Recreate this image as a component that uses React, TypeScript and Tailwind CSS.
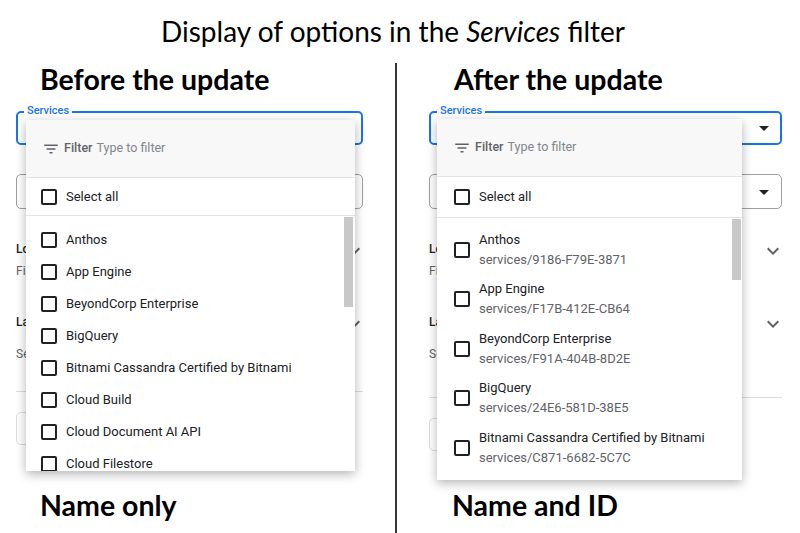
import React from "react";

const FilterIcon = () => (
  <svg width="18" height="18" viewBox="0 0 24 24" fill="#5f6368">
    <path d="M10 18h4v-2h-4v2zM3 6v2h18V6H3zm3 7h12v-2H6v2z" />
  </svg>
);
const ArrowDrop = () => (
  <svg width="24" height="24" viewBox="0 0 24 24" fill="#202124">
    <path d="M7 10l5 5 5-5z" />
  </svg>
);
const Chevron = () => (
  <svg width="24" height="24" viewBox="0 0 24 24" fill="#5f6368">
    <path d="M16.59 8.59L12 13.17 7.41 8.59 6 10l6 6 6-6z" />
  </svg>
);
const Box = () => (
  <div className="w-[16px] h-[16px] border-2 border-[#202124] rounded-[2px] shrink-0" />
);

const namesLeft = [
  "Anthos",
  "App Engine",
  "BeyondCorp Enterprise",
  "BigQuery",
  "Bitnami Cassandra Certified by Bitnami",
  "Cloud Build",
  "Cloud Document AI API",
  "Cloud Filestore",
];
const namesRight: [string, string][] = [
  ["Anthos", "services/9186-F79E-3871"],
  ["App Engine", "services/F17B-412E-CB64"],
  ["BeyondCorp Enterprise", "services/F91A-404B-8D2E"],
  ["BigQuery", "services/24E6-581D-38E5"],
  ["Bitnami Cassandra Certified by Bitnami", "services/C871-6682-5C7C"],
];

function Underlay({ arrows, vis, wide }: { arrows: boolean; vis: string; wide: boolean }) {
  return (
    <div className="w-full">
      <div className="relative mt-[8px] h-[34px] border-2 border-[#1a73e8] rounded-[5px] flex items-center justify-end pr-[4px]">
        <span className="absolute -top-[9px] left-[6px] bg-white px-[3px] text-[11px] leading-[14px] font-medium text-[#1a73e8]">
          Services
        </span>
        {arrows && <ArrowDrop />}
      </div>
      <div className="mt-[29px] h-[35px] border border-[#9aa0a6] rounded-[5px] flex items-center justify-end pr-[5px]">
        {arrows && <ArrowDrop />}
      </div>
      <div className="mt-[32px] flex justify-between items-start">
        <div className={vis + " overflow-hidden whitespace-nowrap"}>
          <div className="text-[12px] leading-[16px] font-medium text-[#202124]">Location</div>
          <div className="mt-[6px] text-[12px] leading-[16px] text-[#5f6368]">Filter by location</div>
        </div>
        <div className="-mr-[3px] -mt-[2px]"><Chevron /></div>
      </div>
      <div className="mt-[35px] flex justify-between items-start">
        <div className={vis + " overflow-hidden whitespace-nowrap"}>
          <div className="text-[12px] leading-[16px] font-medium text-[#202124]">Labels</div>
          <div className="mt-[16px] text-[12px] leading-[16px] text-[#5f6368]">Select labels</div>
        </div>
        <div className="-mr-[3px] -mt-[2px]"><Chevron /></div>
      </div>
      <div className={(wide ? "mt-[35px]" : "mt-[29px]") + " h-px bg-[#dadce0]"} />
      <div className="mt-[20px] h-[33px] w-[120px] border border-[#dadce0] rounded-[5px]" />
    </div>
  );
}

function MenuTop() {
  return (
    <div className="h-[58px] shrink-0 bg-[#f8f8f8] flex items-center pl-[16px] gap-[3px] border-b border-[#e3e3e3]">
      <FilterIcon />
      <span className="text-[12.5px] font-medium text-[#5f6368] ml-[1px]">Filter</span>
      <span className="text-[12.5px] text-[#80868b] ml-[1px]">Type to filter</span>
    </div>
  );
}

const heading = "text-[28.5px] font-bold leading-[33px] text-black";
const lato = { fontFamily: "Lato, 'Open Sans', sans-serif" };

export default function App() {
  return (
    <div className="w-[800px] h-[533px] bg-white overflow-hidden" style={{ fontFamily: "Roboto, 'Liberation Sans', sans-serif" }}>
      <div className="h-[63px] flex items-center justify-center text-[28px] text-black pb-[1px] pr-[14px]" style={lato}>
        Display of options in the&nbsp;<span className="italic">Services</span>&nbsp;filter
      </div>
      <div className="flex h-[470px]">
        {/* LEFT */}
        <div className="w-[395px] flex flex-col">
          <div className={"h-[33px] pl-[40px] " + heading} style={lato}>
            Before the update
          </div>
          <div className="relative ml-[16px] w-[347px] h-[382px] mt-[7px]">
            <Underlay arrows={false} vis="w-[10px]" wide={false} />
            <div className="absolute left-[10px] top-[17px] w-[329px] h-[351px] bg-white shadow-[0_3px_10px_rgba(0,0,0,0.3)] overflow-hidden flex flex-col">
              <MenuTop />
              <div className="h-[38px] flex items-center pl-[15px] gap-[9px] border-b border-[#e3e3e3] shrink-0">
                <Box />
                <span className="text-[13px] text-[#202124]">Select all</span>
              </div>
              <div className="relative flex-1">
                <div className="pt-[8px]">
                  {namesLeft.map((n) => (
                    <div key={n} className="h-[32px] flex items-center pl-[15px] gap-[9px]">
                      <Box />
                      <span className="text-[13px] text-[#202124]">{n}</span>
                    </div>
                  ))}
                </div>
                <div className="absolute right-[2px] top-[1px] w-[9px] h-[90px] bg-[#c8c8c8]" />
              </div>
            </div>
          </div>
          <div className={"pl-[40px] mt-[4px] " + heading} style={lato}>
            Name only
          </div>
        </div>
        {/* DIVIDER */}
        <div className="w-[2px] bg-[#333333]" />
        {/* RIGHT */}
        <div className="flex-1 flex flex-col">
          <div className={"h-[33px] pl-[57px] " + heading} style={lato}>
            After the update
          </div>
          <div className="relative ml-[32px] w-[353px] h-[382px] mt-[7px]">
            <Underlay arrows={true} vis="w-[8px]" wide={true} />
            <div className="absolute left-[8px] top-[16px] w-[305px] h-[361px] bg-white shadow-[0_3px_10px_rgba(0,0,0,0.3)] overflow-hidden flex flex-col">
              <MenuTop />
              <div className="h-[41px] flex items-center pl-[17px] gap-[9px] border-b border-[#e3e3e3] shrink-0">
                <Box />
                <span className="text-[13px] text-[#202124]">Select all</span>
              </div>
              <div className="relative flex-1">
                <div className="pt-[7px]">
                  {namesRight.map(([n, id]) => (
                    <div key={n} className="h-[49.5px] flex items-center pl-[17px] gap-[9px]">
                      <Box />
                      <div className="flex flex-col">
                        <span className="text-[13px] leading-[20px] text-[#202124]">{n}</span>
                        <span className="text-[13px] leading-[20px] text-[#5f6368]">{id}</span>
                      </div>
                    </div>
                  ))}
                </div>
                <div className="absolute right-[1px] top-[1px] w-[9px] h-[61px] bg-[#c8c8c8]" />
              </div>
            </div>
          </div>
          <div className={"pl-[55px] mt-[4px] " + heading} style={lato}>
            Name and ID
          </div>
        </div>
      </div>
    </div>
  );
}
